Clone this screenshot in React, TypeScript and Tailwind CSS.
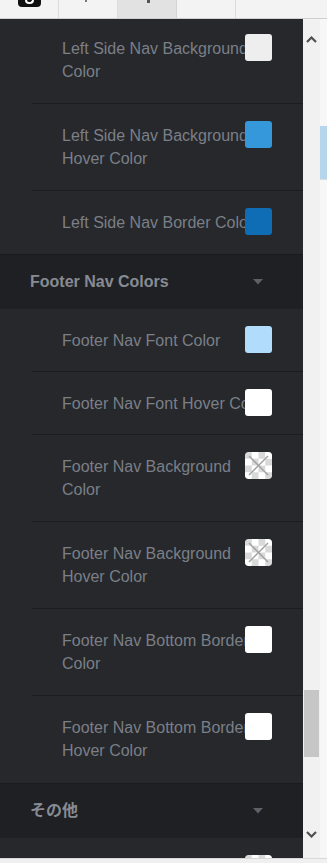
import React from "react";

type Swatch = { kind: "solid"; color: string } | { kind: "clear" };

type Row = { label: string; swatch: Swatch; double: boolean };

function Checker() {
  return (
    <svg width="27" height="27" viewBox="0 0 27 27" className="block">
      <defs>
        <pattern id="chk" width="13.5" height="13.5" patternUnits="userSpaceOnUse">
          <rect width="13.5" height="13.5" fill="#ffffff" />
          <rect width="6.75" height="6.75" fill="#d9d9d9" />
          <rect x="6.75" y="6.75" width="6.75" height="6.75" fill="#d9d9d9" />
        </pattern>
      </defs>
      <rect width="27" height="27" rx="3" fill="url(#chk)" />
      <line x1="4" y1="4" x2="23" y2="23" stroke="#a0a0a0" strokeWidth="1.5" />
      <line x1="23" y1="4" x2="4" y2="23" stroke="#a0a0a0" strokeWidth="1.5" />
    </svg>
  );
}

function SwatchBox({ s }: { s: Swatch }) {
  if (s.kind === "clear") {
    return (
      <div className="absolute right-[31px] top-[17px] w-[27px] h-[27px] rounded-[3px] overflow-hidden">
        <Checker />
      </div>
    );
  }
  return (
    <div
      className="absolute right-[31px] top-[17px] w-[27px] h-[27px] rounded-[3px]"
      style={{ backgroundColor: s.color }}
    />
  );
}

function SettingRow({ row, last, lastPb }: { row: Row; last?: boolean; lastPb?: "a" | "b" }) {
  let cls = "relative ml-[32px] pl-[30px] pr-[31px] pt-[20px] ";
  if (last) {
    cls += lastPb === "a" ? "pb-[20px]" : "pb-[21px]";
  } else {
    cls += (row.double ? "pb-[20px]" : "pb-[19px]") + " border-b border-[#1c1d20]";
  }
  return (
    <div className={cls}>
      <div className="text-[16px] leading-[23px] text-[#7b7f87]">{row.label}</div>
      <SwatchBox s={row.swatch} />
    </div>
  );
}

function SectionHeader({ title }: { title: string }) {
  return (
    <div className="h-[55px] border-t border-[#1a1b1e] bg-[#1f2023] flex items-center justify-between pl-[30px] pr-[40px]">
      <span className="text-[16px] font-bold text-[#878b93] font-['Liberation_Sans','Noto_Sans_CJK_JP',sans-serif]">
        {title}
      </span>
      <svg width="10" height="6" viewBox="0 0 10 6" className="block">
        <path d="M0 0 L10 0 L5 5.5 Z" fill="#5d6066" />
      </svg>
    </div>
  );
}

const leftRows: Row[] = [
  { label: "Left Side Nav Background Color", swatch: { kind: "solid", color: "#eeeeee" }, double: true },
  { label: "Left Side Nav Background Hover Color", swatch: { kind: "solid", color: "#3498db" }, double: true },
  { label: "Left Side Nav Border Color", swatch: { kind: "solid", color: "#0e6db5" }, double: false },
];

const footerRows: Row[] = [
  { label: "Footer Nav Font Color", swatch: { kind: "solid", color: "#b1dcfb" }, double: false },
  { label: "Footer Nav Font Hover Color", swatch: { kind: "solid", color: "#ffffff" }, double: false },
  { label: "Footer Nav Background Color", swatch: { kind: "clear" }, double: true },
  { label: "Footer Nav Background Hover Color", swatch: { kind: "clear" }, double: true },
  { label: "Footer Nav Bottom Border Color", swatch: { kind: "solid", color: "#ffffff" }, double: true },
  { label: "Footer Nav Bottom Border Hover Color", swatch: { kind: "solid", color: "#ffffff" }, double: true },
];

function Chevron({ up }: { up?: boolean }) {
  return (
    <svg width="11" height="7" viewBox="0 0 11 7" className="block">
      <path
        d={up ? "M1 6 L5.5 1.5 L10 6" : "M1 1 L5.5 5.5 L10 1"}
        fill="none"
        stroke="#505050"
        strokeWidth="2.2"
      />
    </svg>
  );
}

export default function App() {
  return (
    <div className="w-[327px] h-[863px] overflow-hidden bg-[#f1f1f1] font-['Liberation_Sans',Arial,sans-serif] flex flex-col">
      {/* top tab bar */}
      <div className="h-[19px] shrink-0 flex bg-[#f3f3f3] border-b border-[#cfcfcf]">
        <div className="w-[59px] border-r border-[#dcdcdc] relative">
          <div className="absolute left-[18px] top-0 w-[23px] h-[7px] bg-[#111] rounded-b-[4px] flex justify-center">
            <div className="w-[9px] h-[4px] rounded-b-full border-[2px] border-t-0 border-white" />
          </div>
        </div>
        <div className="w-[59px] border-r border-[#dcdcdc] relative">
          <div className="absolute left-[26px] top-0 w-[2px] h-[2px] bg-[#777]" />
        </div>
        <div className="w-[59px] border-r border-[#d4d4d4] bg-[#e2e2e2] relative">
          <div className="absolute left-[29px] top-0 w-[3px] h-[3px] bg-[#555]" />
        </div>
        <div className="w-[59px] border-r border-[#dcdcdc]" />
        <div className="flex-1" />
      </div>

      <div className="flex h-[839px] shrink-0">
        {/* dark panel */}
        <div className="w-[303px] shrink-0 bg-[#26282b] overflow-hidden">
          <div className="-mt-[2px]">
            {leftRows.map((r, i) => (
              <SettingRow key={r.label} row={r} last={i === leftRows.length - 1} lastPb="a" />
            ))}
            <SectionHeader title="Footer Nav Colors" />
            {footerRows.map((r, i) => (
              <SettingRow key={r.label} row={r} last={i === footerRows.length - 1} lastPb="b" />
            ))}
            <SectionHeader title="その他" />
            <SettingRow row={{ label: "\u00a0", swatch: { kind: "clear" }, double: false }} />
          </div>
        </div>

        {/* scrollbar */}
        <div className="w-[17px] shrink-0 bg-[#f1f1f1] flex flex-col items-center">
          <div className="mt-[17px]">
            <Chevron up />
          </div>
          <div className="mt-[647px] w-[15px] h-[67px] bg-[#c6c6c6]" />
          <div className="mt-[74px]">
            <Chevron />
          </div>
        </div>

        {/* right strip */}
        <div className="flex-1 bg-[#f7f7f7] flex flex-col">
          <div className="mt-[107px] h-[54px] bg-[#b5d5ec] border-b border-[#dcdcdc]" />
        </div>
      </div>

      <div className="flex-1 border-t border-[#d8d8d8] bg-[#f0f0f0]" />
    </div>
  );
}
